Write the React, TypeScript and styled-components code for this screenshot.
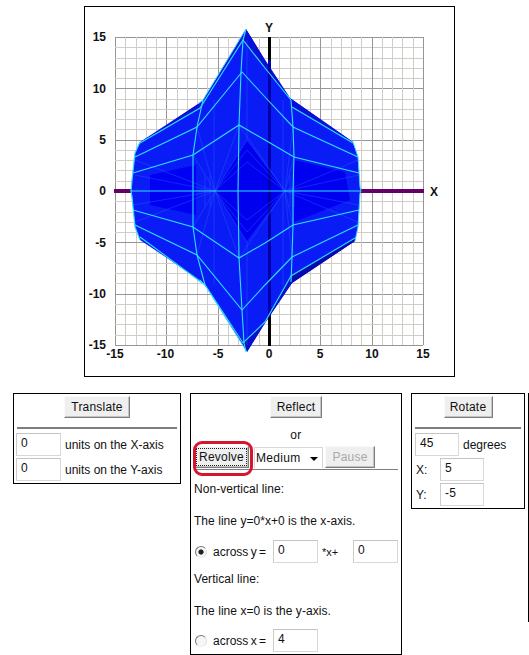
import React from "react";
import styled, { createGlobalStyle } from "styled-components";

const Global = createGlobalStyle`
  html, body { margin: 0; padding: 0; background: #fff; }
  body { font-family: "Liberation Sans", Arial, sans-serif; font-size: 12px; color: #111; overflow: hidden; }
`;
const Page = styled.div`
  width: 529px;
  height: 655px;
  padding-top: 6px;
  box-sizing: border-box;
`;
const GraphFrame = styled.div`
  width: 371px;
  height: 371px;
  margin-left: 84px;
  border: 1px solid #000;
  box-sizing: border-box;
`;
const GraphSvg = styled.svg`
  display: block;
  width: 369px;
  height: 369px;
`;
const PanelRow = styled.div`
  display: flex;
  align-items: flex-start;
  gap: 9px;
  margin: 16px 0 0 13px;
`;
const Panel = styled.div<{ $width: number }>`
  width: ${(p) => p.$width}px;
  box-sizing: border-box;
  border: 1px solid #000;
  padding: 2px;
  display: flex;
  flex-direction: column;
  position: relative;
`;
const ButtonRow = styled.div`
  display: flex;
  justify-content: center;
`;
const ActionButton = styled.button<{ $width: number }>`
  width: ${(p) => p.$width}px;
  height: 22px;
  padding: 0;
  background: #efefef;
  color: #111;
  font: 12px "Liberation Sans", Arial, sans-serif;
  letter-spacing: 0.2px;
  border: 1px solid;
  border-color: #fafafa #7d7d7d #7d7d7d #fafafa;
  box-shadow: inset -1px -1px 0 #c4c4c4;
  &:disabled { color: #a8a8a8; }
`;
const FocusLabel = styled.span`
  display: block;
  margin: 2px;
  line-height: 16px;
  outline: 1px dotted #222;
`;
const Divider = styled.div`
  height: 2px;
  background: #7e7e7e;
  margin: 9px 1px 4px;
`;
const FieldRow = styled.div<{ $indent?: number }>`
  display: flex;
  align-items: center;
  height: 23px;
  margin: 0 0 2px ${(p) => p.$indent ?? 0}px;
  &:last-child { margin-bottom: 0; }
`;
const NumberField = styled.input<{ $width?: number }>`
  width: ${(p) => p.$width ?? 45}px;
  height: 23px;
  box-sizing: border-box;
  flex: none;
  padding: 0 0 3px 4px;
  border: 1px solid #d8d8d8;
  border-top-color: #c4c4c4;
  border-left-color: #cccccc;
  background: #fff;
  color: #111;
  font: 12px "Liberation Sans", Arial, sans-serif;
  letter-spacing: 0.2px;
`;
const FieldText = styled.span<{ $gap: number; $width?: number }>`
  margin-left: ${(p) => p.$gap}px;
  ${(p) => (p.$width ? `width: ${p.$width}px; flex: none;` : "")}
`;
const OrLine = styled.div`
  height: 14px;
  margin-top: 10px;
  line-height: 14px;
  text-align: center;
  letter-spacing: 0.3px;
`;
const ControlRow = styled.div`
  display: flex;
  align-items: center;
  gap: 2px;
  margin: 4px 0 0 1px;
  height: 22px;
`;
const SpeedWrap = styled.div`
  position: relative;
  width: 69px;
  height: 21px;
  margin: 1px 0 0 3px;
`;
const SpeedSelect = styled.select`
  appearance: none;
  width: 100%;
  height: 100%;
  padding: 0 0 0 1px;
  border: 1px solid #d8d8d8;
  border-bottom: none;
  background: #fff;
  color: #111;
  font: 12px "Liberation Sans", Arial, sans-serif;
  letter-spacing: 0.3px;
`;
const Caret = styled.span`
  position: absolute;
  right: 5px;
  top: 10px;
  width: 0;
  height: 0;
  border: 4px solid transparent;
  border-top: 4px solid #000;
  border-bottom: none;
`;
const WideDivider = styled(Divider)`
  margin: 1px 1px 3px;
  height: 1px;
`;
const TextLine = styled.div`
  height: 32px;
  line-height: 32px;
  padding-left: 1px;
  letter-spacing: 0.04px;
`;
const RadioRow = styled.div<{ $top: number }>`
  display: flex;
  align-items: center;
  height: 23px;
  margin-top: ${(p) => p.$top}px;
`;
const Radio = styled.input`
  appearance: none;
  flex: none;
  width: 12px;
  height: 12px;
  margin: 0 0 0 2px;
  border-radius: 50%;
  border: 1px solid;
  border-color: #777 #ddd #eee #777;
  background: #f6f6f6;
  &:checked { background: radial-gradient(circle, #222 0 2.2px, #f6f6f6 3px); }
`;
const RadioLabel = styled.span`
  margin-left: 6px;
  width: 60px;
  flex: none;
  word-spacing: -1px;
`;
const ProductText = styled.span`
  width: 31px;
  margin-left: 4px;
  flex: none;
  font-size: 11px;
`;
const Highlight = styled.span`
  position: absolute;
  left: 2px;
  top: 47px;
  width: 60px;
  height: 35px;
  box-sizing: border-box;
  border: 3px solid #d5162f;
  border-radius: 9px;
  pointer-events: none;
`;
const EdgeRule = styled.div`
  width: 1px;
  height: 229px;
  margin-left: -6px;
  background: #000;
`;

const cx = 269, cy = 191, u = 308 / 30;
const grid = Array.from({ length: 31 }, (_, i) => i - 15);
const outline =
  "246,29 203,100 198,104 140,142 135,153 132,180 131,191 132,197 135,227 140,240 200,280 205,285 247,352 265,323 292,283 355,241 358,227 360,193 361,191 360,187 358,157 353,142 290,98 265,60";
const wires = [
  "131,191 361,191",
  "246,29 243,40 241,72 239,125 238,191 239,258 242,310 244,343 246,352",
  "203,100 197,127 193,155 193,191 193,227 197,255 205,285",
  "291,100 293,127 294,157 293,191 293,225 292,257 291,282",
  "140,143 200,108 243,40 265,68 291,100",
  "292,107 353,143",
  "135,157 197,127 242,72 265,97 293,127 358,157",
  "133,173 193,155 239,125 265,140 294,157 359,173",
  "133,210 193,227 239,258 265,243 293,225 359,210",
  "135,225 197,255 242,310 265,285 292,257 358,225",
  "140,237 205,285 243,343 265,322 291,276 355,238",
];
const faint = [
  "215,191 247,140 285,191 247,242 215,191",
  "215,191 247,150 285,191 247,232 215,191",
  "215,191 247,162 285,191 247,220 215,191",
  "215,191 135,160", "215,191 135,175", "215,191 133,205", "215,191 135,222",
  "215,191 193,155", "215,191 197,127", "215,191 193,227", "215,191 197,255",
  "285,191 358,160", "285,191 359,175", "285,191 359,205", "285,191 358,222",
  "285,191 294,157", "285,191 293,127", "285,191 293,225", "285,191 292,257",
  "215,191 239,125", "215,191 239,258", "285,191 239,125", "285,191 239,258",
  "214,100 214,285", "283,100 283,285", "247,140 247,40", "247,242 247,345",
  "205,175 205,207", "210,175 210,207", "290,175 290,207", "294,175 294,207",
];
const xLabels: [number, string][] = [[115, "-15"], [165.5, "-10"], [218, "-5"], [269, "0"], [320, "5"], [372, "10"], [423, "15"]];
const yLabels: [number, string][] = [[37, "15"], [89, "10"], [140, "5"], [191, "0"], [243, "-5"], [294, "-10"], [345, "-15"]];

const Graph = () => (
  <GraphSvg viewBox="85 7 369 369" aria-label="graph">
    {grid.map((n) => {
      const major = n % 5 === 0;
      const p = Math.round(cx + n * u) + 0.5;
      const q = Math.round(cy + n * u) + 0.5;
      const c = major ? "#969696" : "#d0ccc8";
      return (
        <g key={n}>
          <line x1={p} x2={p} y1={37} y2={345} stroke={c} />
          <line x1={115} x2={423} y1={q} y2={q} stroke={c} />
        </g>
      );
    })}
    <rect x={114} y={189} width={310} height={4} fill="#660066" />
    <rect x={268} y={37} width={3} height={309} fill="#000" />
    <polygon points={outline} fill="#0a1cf6" />
    <polygon points="140,143 200,108 243,40 246,29 203,100 198,104" fill="#0810d8" />
    <polygon points="140,238 205,285 243,343 247,352 205,285 200,280" fill="#0808b0" />
    <polygon points="292,107 353,143 353,142 290,98" fill="#0810d8" />
    <polygon points="291,276 355,238 355,241 292,283" fill="#0808b0" />
    <polygon points="246,29 265,60 290,98 265,68 243,40" fill="#0810d8" />
    <polygon points="243,343 265,322 291,276 292,283 265,323 247,352" fill="#0810c8" />
    <polygon points="150,175 196,165 196,215 150,205" fill="#0000f4" />
    <polygon points="215,191 247,140 285,191 247,242" fill="#0000ee" />
    <polygon points="294,160 345,172 350,200 294,222" fill="#0000f0" />
    <rect x={268} y={60} width={3} height={257} fill="#0000a6" />
    {faint.map((p) => (
      <polyline key={p} points={p} fill="none" stroke="#2a58ff" strokeWidth={0.8} opacity={0.55} />
    ))}
    <polyline points="246,29 203,100 198,104" fill="none" stroke="#38d8ff" />
    <polyline points="140,142 135,153 132,180 131,191 132,197 135,227 140,240" fill="none" stroke="#38d8ff" strokeWidth={1.2} />
    <polyline points="200,280 205,285 247,352" fill="none" stroke="#58e0ff" />
    <polyline points="353,142 358,157 360,187 361,191 360,193 358,227 355,241" fill="none" stroke="#38d8ff" />
    {wires.map((p) => (
      <polyline key={p} points={p} fill="none" stroke="#2ce0ff" strokeWidth={1.1} />
    ))}
    <g fontFamily="'Liberation Sans', Arial, sans-serif" fontWeight={700} fontSize={12} fill="#111">
      {yLabels.map(([y, t]) => (
        <text key={t} x={106} y={y + 4} textAnchor="end">{t}</text>
      ))}
      {xLabels.map(([x, t]) => (
        <text key={t} x={x} y={358} textAnchor="middle">{t}</text>
      ))}
      <text x={434} y={196} textAnchor="middle">X</text>
      <text x={269} y={32} textAnchor="middle">Y</text>
    </g>
  </GraphSvg>
);

export default function App() {
  return (
    <Page>
      <Global />
      <GraphFrame>
        <Graph />
      </GraphFrame>
      <PanelRow>
        <Panel $width={168}>
          <ButtonRow>
            <ActionButton $width={66}>Translate</ActionButton>
          </ButtonRow>
          <Divider />
          <FieldRow>
            <NumberField defaultValue="0" />
            <FieldText $gap={4}>units on the X-axis</FieldText>
          </FieldRow>
          <FieldRow>
            <NumberField defaultValue="0" />
            <FieldText $gap={4}>units on the Y-axis</FieldText>
          </FieldRow>
        </Panel>
        <Panel $width={212}>
          <ButtonRow>
            <ActionButton $width={52}>Reflect</ActionButton>
          </ButtonRow>
          <OrLine>or</OrLine>
          <ControlRow>
            <ActionButton $width={55}>
              <FocusLabel>Revolve</FocusLabel>
            </ActionButton>
            <SpeedWrap>
              <SpeedSelect defaultValue="Medium">
                <option>Medium</option>
                <option>Slow</option>
                <option>Fast</option>
              </SpeedSelect>
              <Caret />
            </SpeedWrap>
            <ActionButton $width={50} disabled>Pause</ActionButton>
          </ControlRow>
          <WideDivider />
          <TextLine>Non-vertical line:</TextLine>
          <TextLine>The line y=0*x+0 is the x-axis.</TextLine>
          <RadioRow $top={3}>
            <Radio type="radio" name="across" defaultChecked />
            <RadioLabel>across y =</RadioLabel>
            <NumberField defaultValue="0" />
            <ProductText>*x+</ProductText>
            <NumberField defaultValue="0" />
          </RadioRow>
          <TextLine>Vertical line:</TextLine>
          <TextLine>The line x=0 is the y-axis.</TextLine>
          <RadioRow $top={2}>
            <Radio type="radio" name="across" />
            <RadioLabel>across x =</RadioLabel>
            <NumberField defaultValue="4" />
          </RadioRow>
          <Highlight />
        </Panel>
        <Panel $width={114}>
          <ButtonRow>
            <ActionButton $width={49}>Rotate</ActionButton>
          </ButtonRow>
          <Divider />
          <FieldRow $indent={1}>
            <NumberField $width={44} defaultValue="45" />
            <FieldText $gap={4}>degrees</FieldText>
          </FieldRow>
          <FieldRow $indent={1}>
            <FieldText $gap={1} $width={24}>X:</FieldText>
            <NumberField $width={44} defaultValue="5" />
          </FieldRow>
          <FieldRow $indent={1}>
            <FieldText $gap={1} $width={24}>Y:</FieldText>
            <NumberField $width={44} defaultValue="-5" />
          </FieldRow>
        </Panel>
        <EdgeRule />
      </PanelRow>
    </Page>
  );
}
